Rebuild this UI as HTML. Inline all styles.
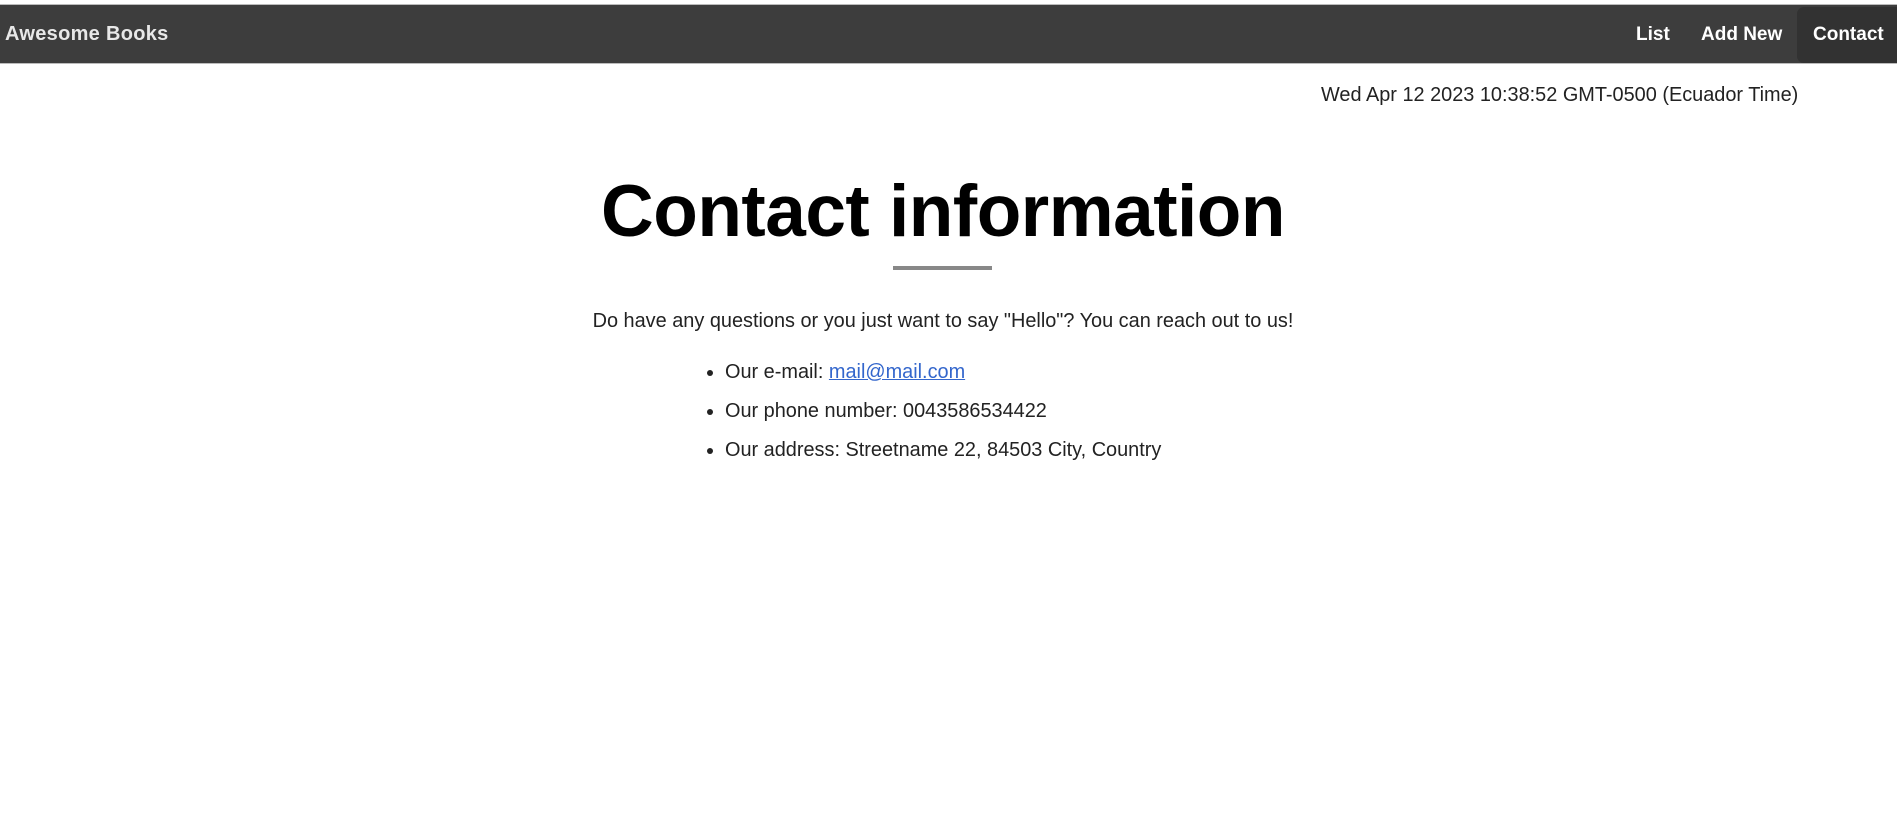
<!DOCTYPE html>
<html><head><meta charset="utf-8"><style>
html,body{margin:0;padding:0;background:#fff;width:1897px;height:824px;overflow:hidden;font-family:"Liberation Sans",Arial,sans-serif;color:#222}
.bar{position:absolute;left:0;top:4px;width:1897px;height:60px;background:#3d3d3d;border-top:1px solid #bbb;border-bottom:1px solid #bbb;box-sizing:border-box}
.logo{position:absolute;left:5px;top:22px;font-size:20px;font-weight:bold;color:#e8e8e8;letter-spacing:0.3px;line-height:24px}
.nav{position:absolute;top:23px;font-size:19px;font-weight:bold;color:#fff;line-height:24px}
.cbg{position:absolute;left:1797px;top:7px;width:110px;height:56px;background:#323232;border-radius:7px}
.date{position:absolute;left:1321px;top:83px;font-size:19.9px;line-height:24px;color:#222}
h1{position:absolute;left:0;width:1886px;text-align:center;top:172px;margin:0;font-size:73px;font-weight:bold;color:#000;line-height:80px;letter-spacing:-0.5px}
.line{position:absolute;left:893px;top:266px;width:99px;height:4px;background:#888}
p{position:absolute;left:0;width:1886px;text-align:center;top:309px;margin:0;font-size:19.9px;line-height:24px}
ul{position:absolute;left:725px;top:360px;margin:0;padding:0;font-size:19.9px;line-height:24px}
li{margin:0 0 15px 0}
a{color:#3366cc}
</style></head><body>
<div class="bar"></div>
<div class="logo">Awesome Books</div>
<div class="cbg"></div>
<div class="nav" style="left:1636px">List</div>
<div class="nav" style="left:1701px">Add New</div>
<div class="nav" style="left:1813px">Contact</div>
<div class="date">Wed Apr 12 2023 10:38:52 GMT-0500 (Ecuador Time)</div>
<h1>Contact information</h1>
<div class="line"></div>
<p>Do have any questions or you just want to say "Hello"? You can reach out to us!</p>
<ul>
<li>Our e-mail: <a href="#">mail@mail.com</a></li>
<li>Our phone number: 0043586534422</li>
<li>Our address: Streetname 22, 84503 City, Country</li>
</ul>
</body></html>
